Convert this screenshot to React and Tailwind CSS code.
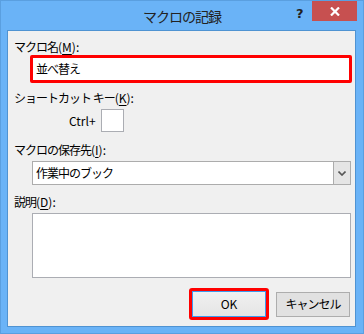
import React from 'react';

const jp = { fontFamily: '"Noto Sans CJK JP", "Noto Sans", sans-serif' };

function Label({ text, mnemonic, className = '' }) {
  return (
    <div className={`h-4 leading-4 text-[12px] text-black pl-[6px] whitespace-pre ${className}`}>
      <span className="tracking-[-1px]">{text}</span>(<span className="underline underline-offset-2">{mnemonic}</span>):
    </div>
  );
}

export default function App() {
  return (
    <div style={jp} className="w-[364px] h-[334px] bg-[#6ab3f7] border border-[#5a9fe0] flex flex-col overflow-hidden">
      {/* タイトルバー */}
      <div className="h-[29px] flex items-start relative">
        <div className="flex-1 h-[29px] flex items-center justify-center text-[14px] tracking-[-1px] text-[#222] pt-[1px]">
          マクロの記録
        </div>
        <div className="absolute left-[295px] top-[6px] text-[13px] font-bold text-[#222] leading-none" style={{ fontFamily: '"DejaVu Sans", sans-serif' }}>?</div>
        <div className="absolute left-[311px] top-0 w-[45px] h-[20px] bg-[#c75050] flex items-center justify-center">
          <svg width="10" height="9" viewBox="0 0 10 9">
            <path d="M1 0.5 L9 8.5 M9 0.5 L1 8.5" stroke="#fff" strokeWidth="2.2" />
          </svg>
        </div>
      </div>

      {/* クライアント領域 */}
      <div className="ml-[6px] w-[349px] h-[297px] bg-[#f0f0f0] border border-[#4f93d2] flex flex-col pt-[8px]">
        <Label text="マクロ名" mnemonic="M" />
        <div className="ml-[22px] mr-[3px] h-[28px] border-[3px] border-[#ff0000] rounded-[2px] bg-white flex items-center pl-[3px] text-[12px] tracking-[-1px] text-black">
          並べ替え
        </div>

        <Label text="ショートカット キー" mnemonic="K" className="mt-[7px]" />
        <div className="flex items-center mt-[3px]">
          <span className="ml-[61px] text-[12px] text-black">Ctrl+</span>
          <div className="ml-[5px] w-[23px] h-[23px] bg-white border border-[#abadb3]" />
        </div>

        <Label text="マクロの保存先" mnemonic="I" className="mt-[10px]" />
        <div className="ml-[24px] mr-[4px] mt-[3px] h-[24px] bg-white border border-[#acacac] flex">
          <div className="flex-1 flex items-center pl-[3px] text-[12px] tracking-[-1px] text-black">作業中のブック</div>
          <div className="w-[17px] h-full bg-[#e5e5e5] border-l border-[#acacac] flex items-center justify-center">
            <svg width="8" height="5" viewBox="0 0 8 5">
              <path d="M0.5 0.5 L4 4 L7.5 0.5" stroke="#555" strokeWidth="1.6" fill="none" />
            </svg>
          </div>
        </div>

        <Label text="説明" mnemonic="D" className="mt-[9px]" />
        <div className="ml-[24px] mr-[4px] mt-[3px] h-[65px] bg-white border border-[#abadb3]" />

        <div className="flex items-center justify-end gap-[7px] mt-[10px] mr-[5px]">
          <div className="w-[80px] h-[32px] border-[3px] border-[#ff0000] rounded-[3px] flex">
            <div className="flex-1 bg-gradient-to-b from-[#f0f0f0] to-[#e5e5e5] border border-[#3c9aef] flex items-center justify-center text-[12px] text-black">
              OK
            </div>
          </div>
          <div className="w-[74px] h-[25px] bg-[#e1e1e1] border border-[#adadad] flex items-center justify-center text-[12px] tracking-[-1px] text-black">
            キャンセル
          </div>
        </div>
      </div>
    </div>
  );
}
